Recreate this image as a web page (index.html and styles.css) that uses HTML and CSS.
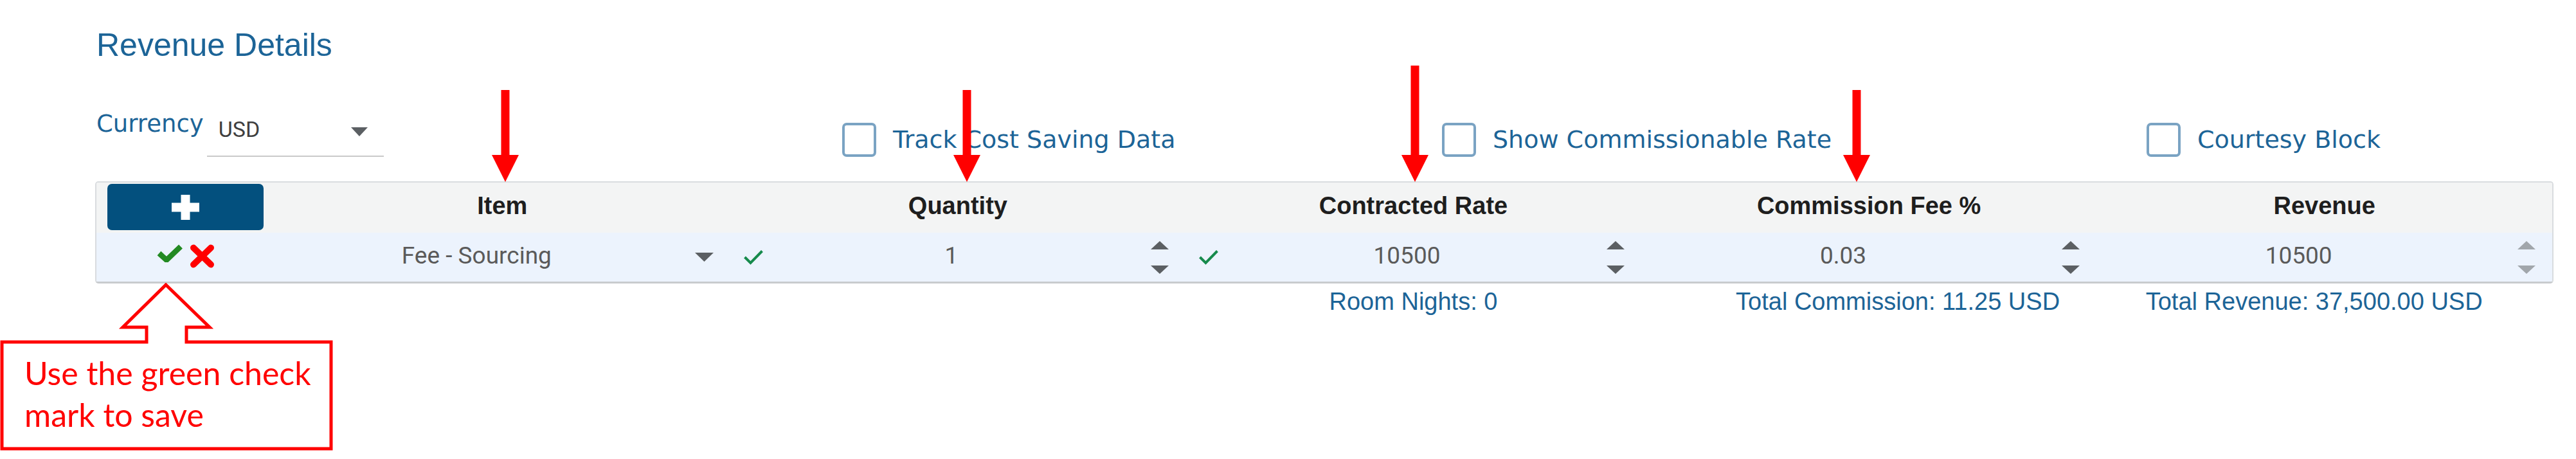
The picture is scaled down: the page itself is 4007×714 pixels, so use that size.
FILE: index.html
```html
<!DOCTYPE html>
<html lang="en">
<head>
<meta charset="utf-8">
<title>Revenue Details</title>
<link rel="stylesheet" href="styles.css">
</head>
<body>
<div class="page">
  <h1 class="title">Revenue Details</h1>

  <div class="controls">
    <div class="currency">
      <span class="currency-label">Currency</span>
      <div class="select">
        <span class="select-value">USD</span>
        <span class="select-caret"></span>
      </div>
    </div>
    <div class="check-opt"><span class="box"></span><span class="opt-text">Track Cost Saving Data</span></div>
    <div class="check-opt"><span class="box"></span><span class="opt-text">Show Commissionable Rate</span></div>
    <div class="check-opt"><span class="box"></span><span class="opt-text">Courtesy Block</span></div>
  </div>

  <div class="grid rev-table">
    <div class="hcell btn-cell">
      <div class="add-btn">
        <svg width="43" height="39" viewBox="0 0 43 39"><rect x="0" y="12.5" width="43" height="14" fill="#fff"/><rect x="14.5" y="0" width="14" height="39" fill="#fff"/></svg>
      </div>
    </div>
    <div class="hcell">Item</div>
    <div class="hcell">Quantity</div>
    <div class="hcell">Contracted Rate</div>
    <div class="hcell">Commission Fee %</div>
    <div class="hcell">Revenue</div>

    <div class="dcell actions">
      <svg width="40" height="28" viewBox="0 0 40 28"><polyline points="3.5,14 15,24.5 37,3.5" fill="none" stroke="#238a23" stroke-width="8.5"/></svg>
      <svg width="39" height="37" viewBox="0 0 39 37"><line x1="6" y1="5.5" x2="33" y2="31.5" stroke="#ff0000" stroke-width="10" stroke-linecap="round"/><line x1="33" y1="5.5" x2="6" y2="31.5" stroke="#ff0000" stroke-width="10" stroke-linecap="round"/></svg>
    </div>
    <div class="dcell field">
      <span class="val">Fee - Sourcing</span>
      <span class="ctrl"><svg width="29" height="14" viewBox="0 0 29 14"><polygon points="0,0 29,0 14.5,14" fill="#5b5f63"/></svg></span>
    </div>
    <div class="dcell field">
      <span class="ok"><svg width="30" height="24" viewBox="0 0 30 24"><polyline points="1.5,12 10.5,21 28.5,2.5" fill="none" stroke="#168a4c" stroke-width="4"/></svg></span>
      <span class="val">1</span>
      <span class="ctrl"><svg width="28" height="51" viewBox="0 0 28 51"><polygon points="14,0 28,13 0,13" fill="#5b5f63"/><polygon points="0,38 28,38 14,51" fill="#5b5f63"/></svg></span>
    </div>
    <div class="dcell field">
      <span class="ok"><svg width="30" height="24" viewBox="0 0 30 24"><polyline points="1.5,12 10.5,21 28.5,2.5" fill="none" stroke="#168a4c" stroke-width="4"/></svg></span>
      <span class="val">10500</span>
      <span class="ctrl"><svg width="28" height="51" viewBox="0 0 28 51"><polygon points="14,0 28,13 0,13" fill="#5b5f63"/><polygon points="0,38 28,38 14,51" fill="#5b5f63"/></svg></span>
    </div>
    <div class="dcell field">
      <span class="val">0.03</span>
      <span class="ctrl"><svg width="28" height="51" viewBox="0 0 28 51"><polygon points="14,0 28,13 0,13" fill="#5b5f63"/><polygon points="0,38 28,38 14,51" fill="#5b5f63"/></svg></span>
    </div>
    <div class="dcell field">
      <span class="val">10500</span>
      <span class="ctrl"><svg width="28" height="51" viewBox="0 0 28 51"><polygon points="14,0 28,13 0,13" fill="#a1a6ab"/><polygon points="0,38 28,38 14,51" fill="#a1a6ab"/></svg></span>
    </div>
  </div>

  <div class="grid totals">
    <div></div><div></div><div></div>
    <div class="total">Room Nights: 0</div>
    <div class="total total-commission">Total Commission: 11.25 USD</div>
    <div class="total total-revenue">Total Revenue: 37,500.00 USD</div>
  </div>

  <svg class="arrow arrow-item" width="42" height="143" viewBox="0 0 42 143"><rect x="14.5" y="0" width="13" height="102" fill="#ff0000"/><polygon points="0,101 42,101 21,143" fill="#ff0000"/></svg>
  <svg class="arrow arrow-qty" width="42" height="143" viewBox="0 0 42 143"><rect x="14.5" y="0" width="13" height="102" fill="#ff0000"/><polygon points="0,101 42,101 21,143" fill="#ff0000"/></svg>
  <svg class="arrow arrow-rate" width="42" height="181" viewBox="0 0 42 181"><rect x="14.5" y="0" width="13" height="140" fill="#ff0000"/><polygon points="0,139 42,139 21,181" fill="#ff0000"/></svg>
  <svg class="arrow arrow-fee" width="42" height="143" viewBox="0 0 42 143"><rect x="14.5" y="0" width="13" height="102" fill="#ff0000"/><polygon points="0,101 42,101 21,143" fill="#ff0000"/></svg>

  <div class="callout">
    <svg class="callout-shape" width="520" height="262" viewBox="0 0 520 262"><polygon points="258,3 326,69 290,69 290,92 515,92 515,258 3,258 3,92 228,92 228,69 191,69" fill="#fff" stroke="#ff0000" stroke-width="5"/></svg>
    <div class="callout-text">Use the green check<br>mark to save</div>
  </div>
</div>
</body>
</html>
```

FILE: styles.css
```css
html, body {
  margin: 0;
  padding: 0;
  background: #ffffff;
}

body {
  width: 4007px;
  height: 714px;
  overflow: hidden;
}

.page {
  position: relative;
  width: 4007px;
  height: 714px;
  box-sizing: border-box;
  padding: 45px 0 0 148px;
}

.title {
  margin: 0 0 0 2px;
  font-family: "Liberation Sans", Arial, sans-serif;
  font-size: 50px;
  line-height: 50px;
  font-weight: normal;
  color: #1c6497;
}

.controls {
  display: grid;
  grid-template-columns: 1162px 933px 1096px auto;
  height: 74px;
  margin-top: 75px;
}

.currency {
  display: flex;
  align-items: flex-start;
}

.currency-label {
  margin: 1px 0 0 2px;
  font-family: "DejaVu Sans", Verdana, sans-serif;
  font-size: 37px;
  line-height: 43px;
  color: #1c6497;
}

.select {
  display: flex;
  align-items: flex-start;
  width: 275px;
  height: 74px;
  box-sizing: border-box;
  margin-left: 5px;
  padding: 14px 25px 0 18px;
  border-bottom: 2px solid #c9c9c9;
}

.select-value {
  flex: 1;
  font-family: Roboto, "Liberation Sans", sans-serif;
  font-size: 34px;
  line-height: 34px;
  color: #3f3f3f;
}

.select-caret {
  width: 0;
  height: 0;
  margin-top: 14px;
  border-left: 13.5px solid transparent;
  border-right: 13.5px solid transparent;
  border-top: 14px solid #5b5f63;
}

.check-opt {
  display: flex;
  align-items: center;
  height: 53px;
  margin-top: 21px;
}

.box {
  width: 53px;
  height: 53px;
  box-sizing: border-box;
  border: 4px solid #7aa3c3;
  border-radius: 7px;
  flex: none;
}

.opt-text {
  margin-left: 26px;
  font-family: "DejaVu Sans", Verdana, sans-serif;
  font-size: 38px;
  line-height: 53px;
  color: #1c6497;
  white-space: nowrap;
}

.grid {
  display: grid;
  grid-template-columns: 277px repeat(5, 1fr);
  width: 3824px;
  box-sizing: border-box;
}

.rev-table {
  margin-top: 38px;
  grid-template-rows: 78px 76px;
  border: 2px solid #d9dcdf;
  border-bottom: 3px solid #c8cbce;
  border-radius: 5px;
  overflow: hidden;
}

.hcell {
  background: #f3f4f4;
  font-family: "Liberation Sans", Arial, sans-serif;
  font-weight: bold;
  font-size: 38px;
  line-height: 72px;
  padding-bottom: 6px;
  text-align: center;
  color: #1e1e1e;
}

.btn-cell {
  padding: 2px 0 0 17px;
}

.add-btn {
  display: flex;
  align-items: center;
  justify-content: center;
  width: 243px;
  height: 72px;
  background: #03507e;
  border-radius: 7px;
}

.dcell {
  background: #ecf3fd;
}

.actions {
  display: flex;
  justify-content: center;
  align-items: flex-start;
  gap: 11px;
  padding-top: 18px;
}

.field {
  display: flex;
  align-items: stretch;
}

.val {
  flex: 1;
  text-align: center;
  font-family: Roboto, "Liberation Sans", sans-serif;
  font-size: 37px;
  line-height: 71px;
  color: #5a5a5a;
}

.ctrl {
  width: 80px;
  flex: none;
  display: flex;
  align-items: center;
  justify-content: center;
}

.ok {
  width: 60px;
  flex: none;
  box-sizing: border-box;
  padding-left: 21px;
  display: flex;
  align-items: center;
}

.totals {
  margin-top: 9px;
  padding: 0 2px;
}

.total {
  text-align: center;
  font-family: "Liberation Sans", Arial, sans-serif;
  font-size: 38px;
  line-height: 38px;
  color: #1c6497;
  white-space: nowrap;
}

.total-commission {
  padding-left: 90px;
}

.total-revenue {
  padding-right: 32px;
}

.arrow {
  position: absolute;
  display: block;
}

.arrow-item { left: 765px; top: 140px; }
.arrow-qty { left: 1483px; top: 140px; }
.arrow-rate { left: 2180px; top: 102px; }
.arrow-fee { left: 2867px; top: 140px; }

.callout {
  position: absolute;
  left: 0;
  top: 440px;
  width: 520px;
  height: 262px;
}

.callout-shape {
  display: block;
}

.callout-text {
  position: absolute;
  left: 38px;
  top: 108px;
  font-family: Lato, "Open Sans", sans-serif;
  font-size: 50px;
  line-height: 65px;
  color: #ff0000;
  white-space: nowrap;
}
```
